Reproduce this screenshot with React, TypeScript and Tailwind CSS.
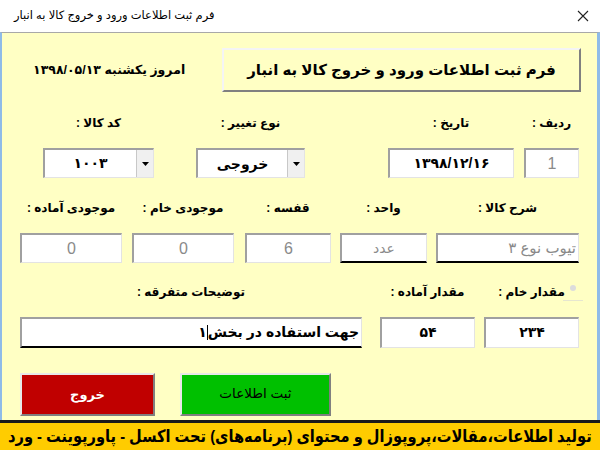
import React from "react";

const sunken =
  "border-t-2 border-l-2 border-t-[#a0a0a0] border-l-[#a0a0a0] border-b border-r border-b-[#e3e3e3] border-r-[#e3e3e3] bg-white";
const sunkenBlack =
  "border-t-2 border-l-2 border-t-[#a0a0a0] border-l-[#a0a0a0] border-b-2 border-r border-b-black border-r-[#e3e3e3] bg-white";

function Label({ children }: { children: React.ReactNode }) {
  return (
    <div dir="rtl" className="h-[16px] leading-[16px] text-[12px] font-bold text-black whitespace-nowrap">
      {children}
    </div>
  );
}

function Field({
  label,
  width,
  ml,
  children,
}: {
  label: string;
  width: number;
  ml: string;
  children: React.ReactNode;
}) {
  return (
    <div className={`flex flex-col items-center ${ml}`} style={{ width }}>
      <Label>{label}</Label>
      <div className="mt-[17px] w-full">{children}</div>
    </div>
  );
}

function Combo({ value, low }: { value: string; low?: boolean }) {
  return (
    <div className={`${sunken} h-[30px] w-full flex`}>
      <div
        dir="rtl"
        className={`flex-1 flex justify-center ${low ? "items-end pb-[2px]" : "items-start pt-[3px]"} text-[14px] font-bold`}
      >
        {value}
      </div>
      <div className="w-[17px] h-full bg-[#f0f0f0] border-l border-[#c8c8c8] flex items-center justify-center">
        <svg width="7" height="4" viewBox="0 0 7 4">
          <path d="M0 0 L7 0 L3.5 4 Z" fill="#000" />
        </svg>
      </div>
    </div>
  );
}

export default function App() {
  return (
    <div className="w-[600px] h-[450px] overflow-hidden bg-white font-['Liberation_Sans','DejaVu_Sans',sans-serif] flex flex-col">
      {/* Title bar */}
      <div className="h-[32px] flex items-center justify-between bg-white">
        <span dir="rtl" className="ml-[14px] text-[11.5px] text-black whitespace-nowrap">
          فرم ثبت اطلاعات ورود و خروج کالا به انبار
        </span>
        <svg width="12" height="12" viewBox="0 0 12 12" className="mr-[11px]">
          <path d="M1 1 L11 11 M11 1 L1 11" stroke="#222" strokeWidth="1.1" />
        </svg>
      </div>

      {/* Body */}
      <div className="h-[388px] bg-[#FFFFC4] border-l-2 border-r-[3px] border-l-[#8fbbe8] border-r-[#8fbbe8] border-t border-t-[#a8a8a8] flex flex-col">
        {/* Header row */}
        <div className="mt-[15px] flex items-center h-[44px]">
          <div dir="rtl" className="ml-[31px] text-[12.5px] font-bold whitespace-nowrap">
            امروز یکشنبه ۱۳۹۸/۰۵/۱۳
          </div>
          <div className="ml-auto mr-[16px] w-[359px] h-[44px] border-t-2 border-l-2 border-t-[#f4f4f4] border-l-[#f4f4f4] border-b-2 border-r-2 border-b-[#808080] border-r-[#808080] bg-[#FFFFC4] flex items-center justify-center">
            <span dir="rtl" className="text-[15px] font-bold whitespace-nowrap">
              فرم ثبت اطلاعات ورود و خروج کالا به انبار
            </span>
          </div>
        </div>

        {/* Row 1 */}
        <div className="mt-[23px] flex">
          <Field label="کد کالا :" width={111} ml="ml-[41px]">
            <Combo value="۱۰۰۳" />
          </Field>
          <Field label="نوع تغییر :" width={109} ml="ml-[42px]">
            <Combo value="خروجی" low />
          </Field>
          <Field label="تاریخ :" width={126} ml="ml-[83px]">
            <div dir="rtl" className={`${sunken} h-[30px] flex justify-center items-start pt-[3px] text-[14px] font-bold`}>
              ۱۳۹۸/۱۲/۱۶
            </div>
          </Field>
          <Field label="ردیف :" width={55} ml="ml-[10px]">
            <div className={`${sunken} h-[30px] flex justify-center items-center text-[16px] text-[#8a8a8a]`}>
              1
            </div>
          </Field>
        </div>

        {/* Row 2 */}
        <div className="mt-[22px] flex">
          <Field label="موجودی آماده :" width={102} ml="ml-[18px]">
            <div className={`${sunken} h-[30px] flex justify-center items-center text-[16px] text-[#8a8a8a]`}>0</div>
          </Field>
          <Field label="موجودی خام :" width={102} ml="ml-[10px]">
            <div className={`${sunken} h-[30px] flex justify-center items-center text-[16px] text-[#8a8a8a]`}>0</div>
          </Field>
          <Field label="قفسه :" width={86} ml="ml-[11px]">
            <div className={`${sunken} h-[30px] flex justify-center items-center text-[16px] text-[#8a8a8a]`}>6</div>
          </Field>
          <Field label="واحد :" width={87} ml="ml-[9px]">
            <div dir="rtl" className={`${sunkenBlack} h-[30px] flex justify-center items-center text-[14px] text-[#8a8a8a]`}>
              عدد
            </div>
          </Field>
          <Field label="شرح کالا :" width={143} ml="ml-[9px]">
            <div dir="rtl" className={`${sunkenBlack} h-[30px] flex items-center pr-[2px] text-[15px] text-[#8a8a8a]`}>
              تیوب نوع ۳
            </div>
          </Field>
        </div>

        {/* Row 3 */}
        <div className="mt-[21px] flex">
          <Field label="توضیحات متفرقه :" width={342} ml="ml-[18px]">
            <div dir="rtl" className={`${sunkenBlack} h-[31px] flex items-center pr-[2px] text-[14px] font-bold whitespace-nowrap`}>
              <span>جهت استفاده در بخش</span>
              <span className="inline-block w-px h-[15px] bg-black"></span>
              <span>۱</span>
            </div>
          </Field>
          <Field label="مقدار آماده :" width={95} ml="ml-[18px]">
            <div dir="rtl" className={`${sunken} h-[31px] flex justify-center items-start pt-[3px] text-[14px] font-bold`}>
              ۵۴
            </div>
          </Field>
          <div className="relative ml-[9px] w-[95px]">
            <Field label="مقدار خام :" width={95} ml="ml-0">
              <div dir="rtl" className={`${sunken} h-[31px] flex justify-center items-start pt-[3px] text-[14px] font-bold`}>
                ۲۳۴
              </div>
            </Field>
            <div className="absolute right-[3px] top-[1px] w-[6px] h-[6px] rounded-full bg-[#dcdcdc]"></div>
            <div className="absolute right-[-4px] top-[16px] w-[20px] h-px bg-[#e6e6d0]"></div>
          </div>
        </div>

        {/* Buttons */}
        <div className="mt-[25px] flex">
          <div className="ml-[18px] w-[135px] h-[43px] bg-[#C00000] border-t-2 border-l-2 border-t-[#e8e8e8] border-l-[#e8e8e8] border-b-2 border-r-2 border-b-[#808080] border-r-[#808080] flex items-center justify-center">
            <span dir="rtl" className="text-[13px] font-bold text-white">خروج</span>
          </div>
          <div className="ml-[25px] w-[151px] h-[43px] bg-[#00C000] border-t-2 border-l-2 border-t-[#e8e8e8] border-l-[#e8e8e8] border-b-2 border-r-2 border-b-[#808080] border-r-[#808080] flex items-center justify-center">
            <span dir="rtl" className="text-[13.5px] text-black">ثبت اطلاعات</span>
          </div>
        </div>
      </div>

      {/* Bottom banner */}
      <div className="h-[3px] bg-[#1a1a1a]"></div>
      <div className="h-[27px] bg-[#FFCC00] overflow-hidden flex justify-end items-center">
        <div
          dir="rtl"
          className="mr-[8px] shrink-0 text-[17px] font-bold text-black whitespace-nowrap tracking-[-0.5px] origin-right scale-x-[0.86]"
        >
          تولید اطلاعات،مقالات،پروپوزال و محتوای (برنامه‌های) تحت اکسل - پاورپوینت - ورد
        </div>
      </div>
    </div>
  );
}
